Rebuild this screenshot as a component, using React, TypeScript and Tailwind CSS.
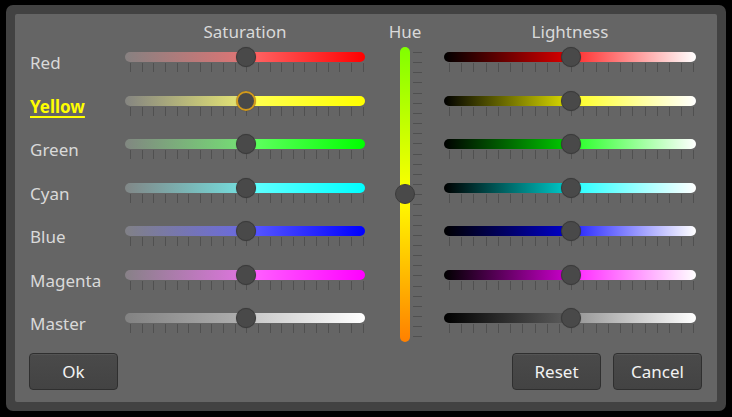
import React from "react";

type Row = { name: string; sl: string; sr: string; ll: string; lr: string; active?: boolean };

const rows: Row[] = [
  {
    name: "Red",
    sl: "bg-[linear-gradient(to_right,#878181,#e07474)]",
    sr: "bg-[linear-gradient(to_right,#ff6a6a,#ff0000)]",
    ll: "bg-[linear-gradient(to_right,#000000,#e00000)]",
    lr: "bg-[linear-gradient(to_right,#ff2a2a,#ffffff)]",
  },
  {
    name: "Yellow",
    active: true,
    sl: "bg-[linear-gradient(to_right,#858581,#e8e874)]",
    sr: "bg-[linear-gradient(to_right,#ffff55,#ffff00)]",
    ll: "bg-[linear-gradient(to_right,#000000,#e0e000)]",
    lr: "bg-[linear-gradient(to_right,#ffff22,#ffffff)]",
  },
  {
    name: "Green",
    sl: "bg-[linear-gradient(to_right,#818781,#74e074)]",
    sr: "bg-[linear-gradient(to_right,#66ff66,#00ff00)]",
    ll: "bg-[linear-gradient(to_right,#000000,#00d000)]",
    lr: "bg-[linear-gradient(to_right,#22ff22,#ffffff)]",
  },
  {
    name: "Cyan",
    sl: "bg-[linear-gradient(to_right,#818787,#74e0e0)]",
    sr: "bg-[linear-gradient(to_right,#66ffff,#00ffff)]",
    ll: "bg-[linear-gradient(to_right,#000000,#00d0d0)]",
    lr: "bg-[linear-gradient(to_right,#22ffff,#ffffff)]",
  },
  {
    name: "Blue",
    sl: "bg-[linear-gradient(to_right,#818187,#6a6ae0)]",
    sr: "bg-[linear-gradient(to_right,#5c5cff,#0000ff)]",
    ll: "bg-[linear-gradient(to_right,#000000,#0000d0)]",
    lr: "bg-[linear-gradient(to_right,#2222ff,#ffffff)]",
  },
  {
    name: "Magenta",
    sl: "bg-[linear-gradient(to_right,#878187,#e074e0)]",
    sr: "bg-[linear-gradient(to_right,#ff66ff,#ff00ff)]",
    ll: "bg-[linear-gradient(to_right,#000000,#d000d0)]",
    lr: "bg-[linear-gradient(to_right,#ff22ff,#ffffff)]",
  },
  {
    name: "Master",
    sl: "bg-[linear-gradient(to_right,#828282,#b0b0b0)]",
    sr: "bg-[linear-gradient(to_right,#c6c6c6,#ffffff)]",
    ll: "bg-[linear-gradient(to_right,#000000,#5e5e5e)]",
    lr: "bg-[linear-gradient(to_right,#939393,#ffffff)]",
  },
];

const ticks21 = Array.from({ length: 21 });
const ticks29 = Array.from({ length: 29 });

function Thumb({ left, active }: { left: string; active?: boolean }) {
  return (
    <div
      className={
        "absolute top-[-5px] h-[20px] w-[20px] rounded-full bg-[#494949] shadow-[0_0_1px_rgba(0,0,0,0.4)] " +
        left +
        (active ? " border-[2px] border-[#d29a1c]" : " border-[1.5px] border-[#3b3b3b]")
      }
    />
  );
}

function HSlider({
  width,
  split,
  left,
  right,
  thumbLeft,
  tickPad,
  active,
}: {
  width: string;
  split: string;
  left: string;
  right: string;
  thumbLeft: string;
  tickPad: string;
  active?: boolean;
}) {
  return (
    <div className={"flex flex-col " + width}>
      <div className="relative h-[10px]">
        <div className="flex h-full w-full overflow-hidden rounded-full">
          <div className={"h-full " + split + " " + left} />
          <div className={"h-full flex-1 " + right} />
        </div>
        <Thumb left={thumbLeft} active={active} />
      </div>
      <div className={"mt-[1px] flex h-[9px] justify-between " + tickPad}>
        {ticks21.map((_, i) => (
          <div key={i} className="h-full w-[1px] bg-[#505050]" />
        ))}
      </div>
    </div>
  );
}

function Button({ children }: { children: React.ReactNode }) {
  return (
    <button className="flex h-[37px] w-[89px] items-center justify-center rounded-[4px] border border-[#2f2f2f] bg-[linear-gradient(to_bottom,#4a4a4a,#434343)] text-[17px] leading-none text-[#f2f2f2] shadow-[inset_0_1px_0_rgba(255,255,255,0.06)]">
      {children}
    </button>
  );
}

export default function App() {
  return (
    <div className="h-[417px] w-[732px] bg-black pl-[6px] pt-[5px] font-['Noto_Sans',sans-serif]">
      <div className="h-[406px] w-[720px] rounded-[7px] bg-[#424242] p-[9px]">
        <div className="flex h-[388px] w-[702px] flex-col rounded-[2px] bg-[#656565]">
          <div className="flex h-[339px] shrink-0 items-start pl-[15px] pt-[6px]">
            {/* Labels */}
            <div className="flex w-[95px] flex-col">
              <div className="h-[24px]" />
              <div className="mt-[8px] flex flex-col">
                {rows.map((r) => (
                  <div key={r.name} className="h-[43.5px]">
                    <div
                      className={
                        "-mt-[1px] h-[24px] text-[17px] leading-[24px] " +
                        (r.active
                          ? "font-bold text-[#ffff00] underline decoration-[1.5px] underline-offset-[3px]"
                          : "text-[#d9d9d9]")
                      }
                    >
                      {r.name}
                    </div>
                  </div>
                ))}
              </div>
            </div>

            {/* Saturation */}
            <div className="flex w-[240px] flex-col">
              <div className="h-[24px] text-center text-[17px] leading-[24px] text-[#d9d9d9]">Saturation</div>
              <div className="mt-[8px] flex flex-col">
                {rows.map((r) => (
                  <div key={r.name} className="h-[43.5px]">
                    <HSlider
                      width="w-[240px]"
                      split="w-[121px]"
                      left={r.sl}
                      right={r.sr}
                      thumbLeft="left-[111px]"
                      tickPad="pl-[5px] pr-[1.5px]"
                      active={r.active}
                    />
                  </div>
                ))}
              </div>
            </div>

            {/* Hue */}
            <div className="ml-[35px] flex w-[22px] flex-col">
              <div className="flex h-[24px] w-[10px] justify-center overflow-visible whitespace-nowrap text-[17px] leading-[24px] text-[#d9d9d9]">
                Hue
              </div>
              <div className="mt-[3px] flex">
                <div className="relative h-[295px] w-[10px]">
                  <div className="h-full w-full rounded-full bg-[linear-gradient(to_bottom,#80ff00,#ffff00,#ff8000)]" />
                  <div className="absolute left-[-5px] top-[137px] h-[20px] w-[20px] rounded-full border-[1.5px] border-[#3b3b3b] bg-[#494949]" />
                </div>
                <div className="ml-[3px] flex h-[295px] w-[9px] flex-col justify-between pb-[4.5px] pt-[5px]">
                  {ticks29.map((_, i) => (
                    <div key={i} className="h-[1px] w-full bg-[#505050]" />
                  ))}
                </div>
              </div>
            </div>

            {/* Lightness */}
            <div className="ml-[22px] flex w-[252px] flex-col">
              <div className="h-[24px] text-center text-[17px] leading-[24px] text-[#d9d9d9]">Lightness</div>
              <div className="mt-[8px] flex flex-col">
                {rows.map((r) => (
                  <div key={r.name} className="h-[43.5px]">
                    <HSlider
                      width="w-[252px]"
                      split="w-[127px]"
                      left={r.ll}
                      right={r.lr}
                      thumbLeft="left-[117px]"
                      tickPad="pl-[5px] pr-[1.5px]"
                    />
                  </div>
                ))}
              </div>
            </div>
          </div>

          <div className="mt-auto flex items-center pb-[12px] pl-[14px] pr-[15px]">
            <Button>Ok</Button>
            <div className="flex-1" />
            <Button>Reset</Button>
            <div className="w-[12px]" />
            <Button>Cancel</Button>
          </div>
        </div>
      </div>
    </div>
  );
}
